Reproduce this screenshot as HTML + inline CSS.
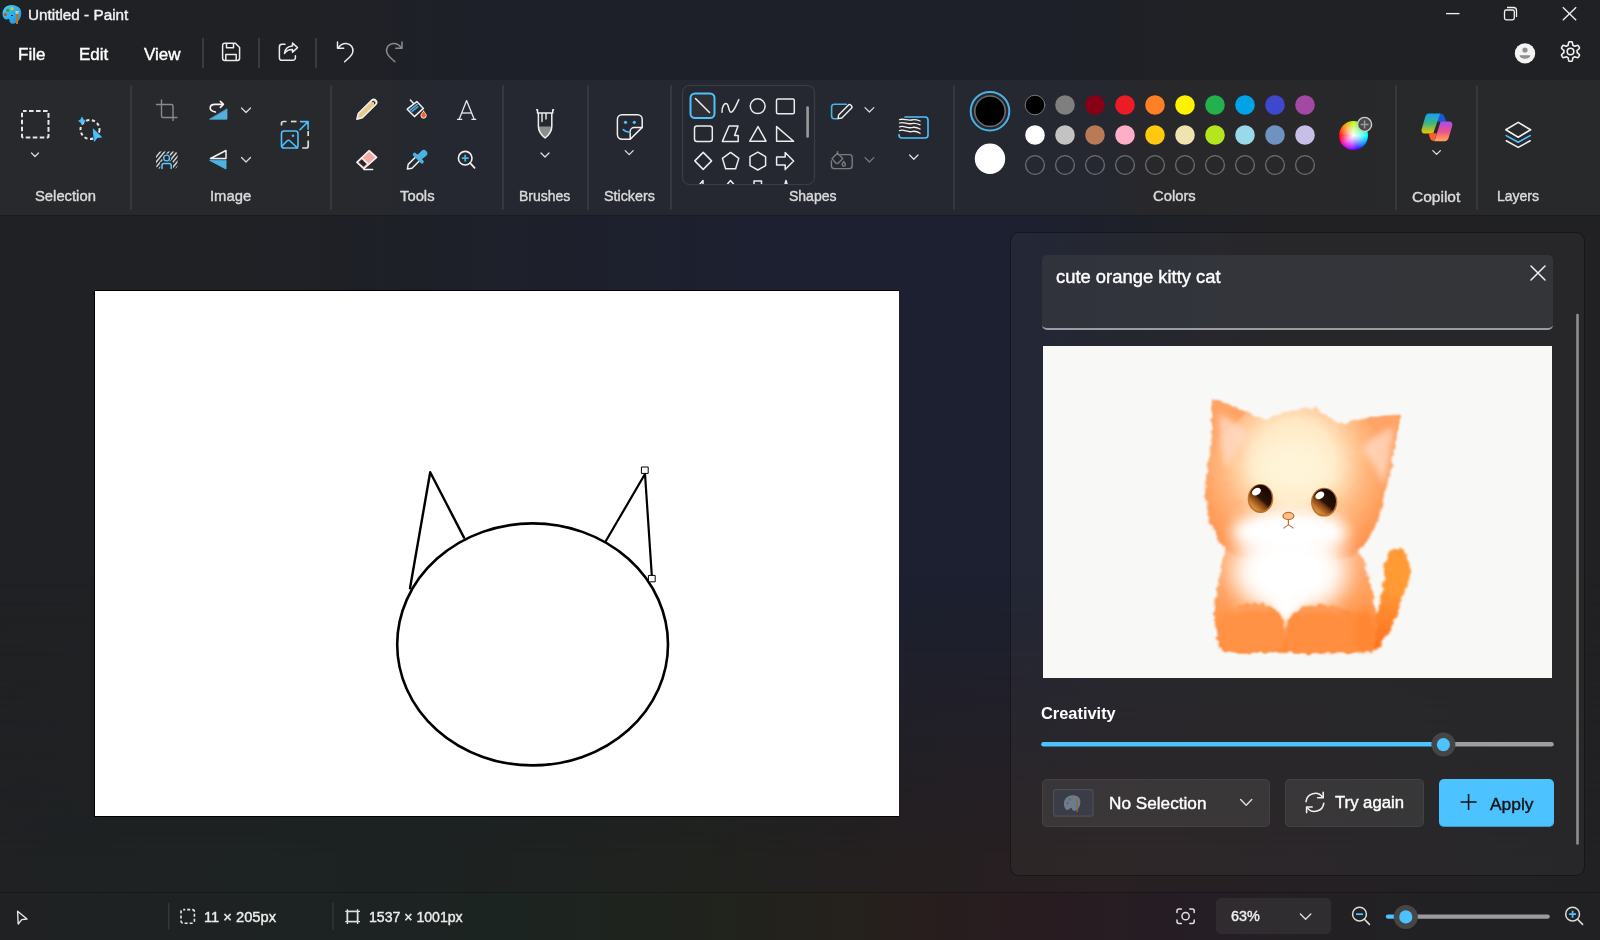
<!DOCTYPE html>
<html><head><meta charset="utf-8">
<style>
*{box-sizing:border-box;margin:0;padding:0}
html,body{width:1600px;height:940px;overflow:hidden;background:#202124}
.t,.lbl{will-change:transform}
body{position:relative;font-family:"Liberation Sans",sans-serif;color:#fff}
.a{position:absolute}
.t{position:absolute;white-space:nowrap;line-height:1;-webkit-text-stroke:0.4px currentColor}
svg{position:absolute;overflow:visible}
#wall{left:0;top:0;width:1600px;height:940px;background:#202124}
#top{left:0;top:0;width:1600px;height:80px;background:linear-gradient(to right,#202124 0,#202125 300px,#1e2029 480px,#1e2029 1060px,#202124 1220px,#202124 100%)}
#ribbon{left:0;top:80px;width:1600px;height:135px;background:linear-gradient(to right,#28292c 0,#28292c 320px,#252831 460px,#252831 1100px,#28282b 1150px,#28292b 100%)}
#rline{left:0;top:215px;width:1600px;height:1px;background:#1a1b1d}
#work{left:0;top:216px;width:1600px;height:676px;background:linear-gradient(to right,#202124 0,#202124 200px,#1e2029 450px,#1c2030 760px,#1c2030 1030px,#1e2029 1130px,#202126 1220px,#212123 1300px,#212123 100%)}
#work2{left:0;top:216px;width:1600px;height:676px;background:linear-gradient(to right,#1f2123 0,#1e2223 150px,#1c2222 400px,#20221e 700px,#251f20 900px,#271f21 1010px,#282022 1100px,#252024 1300px,#222124 1500px,#212123 100%);
 -webkit-mask-image:linear-gradient(to bottom,transparent 0,transparent 360px,black 640px,black 100%);mask-image:linear-gradient(to bottom,transparent 0,transparent 360px,black 640px,black 100%)}
#status{left:0;top:892px;width:1600px;height:48px;background:linear-gradient(to right,#1f2122 0,#1e2222 200px,#1c2322 420px,#1c2421 500px,#20231d 700px,#25211c 850px,#281d1e 950px,#281c21 1050px,#261d24 1160px,#232024 1300px,#212123 1450px,#212123 100%)}
.sep{position:absolute;width:1.6px;top:85px;height:125px;background:#37383c;border-radius:1px}
.lbl{position:absolute;top:188.5px;font-size:14.8px;color:#dadada;white-space:nowrap;line-height:1;-webkit-text-stroke:0.4px currentColor}
.msep{position:absolute;width:1.5px;top:38px;height:30px;background:#3a3b3e}
</style></head><body>
<div id="wall" class="a"></div>
<div id="top" class="a"></div>
<div id="ribbon" class="a"></div>
<div id="rline" class="a"></div>
<div id="work" class="a"></div>
<div id="work2" class="a"></div>
<div id="status" class="a"></div>
<div class="a" style="left:0;top:892px;width:1600px;height:1px;background:rgba(0,0,0,.25)"></div>

<!-- title -->
<div class="t" style="left:28px;top:7px;font-size:15.3px;color:#f2f2f2">Untitled - Paint</div>
<div class="t" style="left:18px;top:46px;font-size:17px;color:#fff">File</div>
<div class="t" style="left:79px;top:46px;font-size:17px;color:#fff">Edit</div>
<div class="t" style="left:144px;top:46px;font-size:17px;color:#fff">View</div>
<div class="msep" style="left:202px"></div>
<div class="msep" style="left:258px"></div>
<div class="msep" style="left:315px"></div>

<!-- ribbon separators -->
<div class="sep" style="left:130px"></div>
<div class="sep" style="left:330px"></div>
<div class="sep" style="left:502px"></div>
<div class="sep" style="left:587px"></div>
<div class="sep" style="left:670px"></div>
<div class="sep" style="left:953px"></div>
<div class="sep" style="left:1395px"></div>
<div class="sep" style="left:1476px"></div>

<div class="lbl" style="left:34.5px">Selection</div>
<div class="lbl" style="left:210px">Image</div>
<div class="lbl" style="left:399.5px">Tools</div>
<div class="lbl" style="left:519px;font-size:14px">Brushes</div>
<div class="lbl" style="left:604px;font-size:14.3px">Stickers</div>
<div class="lbl" style="left:789px;font-size:14px">Shapes</div>
<div class="lbl" style="left:1153px">Colors</div>
<div class="lbl" style="left:1411.5px;font-size:15.5px">Copilot</div>
<div class="lbl" style="left:1497px;font-size:14px">Layers</div>

<!-- canvas -->
<div class="a" style="left:94px;top:290px;width:805px;height:527px;background:#000"></div>
<div class="a" style="left:95px;top:291px;width:804px;height:525px;background:#fff"></div>

<!-- panel -->
<div class="a" style="left:1010px;top:232px;width:574.5px;height:644px;border-radius:9px;background:rgba(255,255,255,.032);border:1.6px solid rgba(10,10,12,.55)"></div>
<div class="a" style="left:1042px;top:255px;width:511px;height:75px;border-radius:5px;background:linear-gradient(to right,#30333c 0,#33353b 200px,#343538 100%);border-bottom:2px solid #9a9ca3"></div>
<div class="t" style="left:1055.5px;top:267.5px;font-size:18.4px;color:#fff">cute orange kitty cat</div>
<svg class="a" style="left:1043px;top:346px;overflow:hidden" width="509" height="332" viewBox="1043 346 509 332">
<defs>
<filter id="fur" filterUnits="userSpaceOnUse" x="1043" y="346" width="509" height="332">
<feTurbulence type="fractalNoise" baseFrequency="0.16 0.16" numOctaves="2" seed="5" result="n"/>
<feDisplacementMap in="SourceGraphic" in2="n" scale="6" xChannelSelector="R" yChannelSelector="G" result="d"/>
<feGaussianBlur in="d" stdDeviation="0.8"/>
</filter>
<filter id="b1" filterUnits="userSpaceOnUse" x="1043" y="346" width="509" height="332"><feGaussianBlur stdDeviation="1.3"/></filter>
<filter id="b2" filterUnits="userSpaceOnUse" x="1043" y="346" width="509" height="332"><feGaussianBlur stdDeviation="3"/></filter>
<filter id="b3" filterUnits="userSpaceOnUse" x="1043" y="346" width="509" height="332"><feGaussianBlur stdDeviation="7"/></filter>
<filter id="b4" filterUnits="userSpaceOnUse" x="1043" y="346" width="509" height="332"><feGaussianBlur stdDeviation="11"/></filter>
<radialGradient id="headg" cx="1294" cy="462" r="108" gradientUnits="userSpaceOnUse">
<stop offset="0" stop-color="#fff4d4"/><stop offset="0.38" stop-color="#ffe8c4"/><stop offset="0.66" stop-color="#ffb880"/><stop offset="0.88" stop-color="#ff9e5c"/><stop offset="1" stop-color="#ff9450"/></radialGradient>
<linearGradient id="bodyg" x1="0" y1="0" x2="0" y2="1"><stop offset="0" stop-color="#ffac74"/><stop offset="0.55" stop-color="#ff9a52"/><stop offset="1" stop-color="#ff8836"/></linearGradient>
<linearGradient id="tailg" x1="0" y1="0" x2="0" y2="1"><stop offset="0" stop-color="#ffa038"/><stop offset="1" stop-color="#ff7624"/></linearGradient>
<linearGradient id="eyeg" x1="0.85" y1="0.1" x2="0.2" y2="0.95"><stop offset="0" stop-color="#140804"/><stop offset="0.5" stop-color="#2a1206"/><stop offset="0.62" stop-color="#7a3e12"/><stop offset="0.85" stop-color="#c47a30"/><stop offset="1" stop-color="#e0a050"/></linearGradient>
</defs>
<rect x="1043" y="346" width="509" height="332" fill="#f8f8f7"/>
<g filter="url(#fur)">
<!-- tail -->
<path d="M1372,640 C1384,624 1392,604 1394,578" stroke="url(#tailg)" stroke-width="20" stroke-linecap="round" fill="none"/>
<ellipse cx="1397" cy="572" rx="13" ry="24" fill="#ff9a34"/>
<!-- body -->
<path d="M1222,652 C1212,630 1212,596 1226,548 L1358,548 C1376,590 1380,628 1372,652 Z" fill="url(#bodyg)"/>
<!-- head -->
<path d="M1212.5,399.5 C1226,404 1250,412 1266,420 C1282,412 1300,407 1316,409 C1326,415 1334,420 1341,424 C1360,418 1382,416 1400,415 C1398,430 1396,440 1394,446 C1392,466 1388,482 1384,496 C1380,520 1372,542 1350,558 L1238,558 C1216,546 1208,522 1205,494 C1206,470 1211,450 1211.7,440 Z" fill="url(#headg)"/>
</g>
<path d="M1212.5,399.5 C1222,403 1236,408 1246,413 L1216,440 C1213,425 1212.5,410 1212.5,399.5 Z" fill="#ffa466" filter="url(#b1)"/>
<path d="M1400,415 C1390,416 1376,417 1364,419 L1394,448 C1396,436 1398,426 1400,415 Z" fill="#ffa466" filter="url(#b1)"/>
<!-- ear inner -->
<path d="M1219,414 C1232,420 1244,428 1250,436 C1240,444 1232,456 1227,470 C1221,450 1219,432 1219,414 Z" fill="#ffdcc8" opacity="0.75" filter="url(#b2)"/>
<path d="M1393,428 C1380,432 1368,440 1362,450 C1372,460 1378,470 1383,486 C1389,466 1392,448 1393,428 Z" fill="#ffdcc8" opacity="0.75" filter="url(#b2)"/>
<!-- face white / chest -->
<ellipse cx="1290" cy="532" rx="58" ry="22" fill="#ffffff" filter="url(#b3)"/>
<ellipse cx="1290" cy="572" rx="58" ry="44" fill="#ffffff" filter="url(#b4)"/>
<ellipse cx="1286" cy="604" rx="14" ry="22" fill="#ffffff" filter="url(#b3)"/>
<ellipse cx="1294" cy="468" rx="40" ry="24" fill="#fff4d8" filter="url(#b4)"/>
<!-- paws -->
<g filter="url(#fur)">
<path d="M1230,652 C1218,650 1216,628 1224,614 C1232,602 1266,600 1278,612 C1286,622 1286,640 1282,648 C1278,652 1260,653 1230,652 Z" fill="#ff9244"/>
<path d="M1292,652 C1284,648 1284,626 1292,614 C1302,602 1340,602 1354,614 C1366,626 1366,646 1356,652 C1340,654 1310,654 1292,652 Z" fill="#ff8e40"/>
</g>
<path d="M1231,612 C1240,606 1258,604 1270,610" stroke="#ffc498" stroke-width="2" fill="none" filter="url(#b2)"/>
<path d="M1300,612 C1312,606 1330,606 1342,612" stroke="#ffc498" stroke-width="2" fill="none" filter="url(#b2)"/>
<ellipse cx="1364" cy="630" rx="10" ry="20" fill="#ff8630" filter="url(#b2)"/>
<!-- eyes -->
<ellipse cx="1260.5" cy="498.5" rx="12.8" ry="14.6" fill="#c07028"/>
<ellipse cx="1260.5" cy="498" rx="11.4" ry="13.2" fill="url(#eyeg)"/>
<ellipse cx="1256.4" cy="491.6" rx="4.8" ry="3.4" fill="#fff" transform="rotate(-30 1256.4 491.6)"/>
<ellipse cx="1324.2" cy="502.2" rx="13.2" ry="14.4" fill="#c07028"/>
<ellipse cx="1324.2" cy="501.8" rx="11.8" ry="13" fill="url(#eyeg)"/>
<ellipse cx="1319.8" cy="495.4" rx="4.8" ry="3.4" fill="#fff" transform="rotate(-30 1319.8 495.4)"/>
<!-- nose -->
<ellipse cx="1288.4" cy="516" rx="5.4" ry="3.6" fill="#f8c08a" stroke="#c86a2a" stroke-width="1.3"/>
<path d="M1288.4,519.6 V525 M1283.6,528.4 C1286,526.4 1288,525 1288.4,525 C1289,525 1291,526.4 1293.4,528.4" stroke="#c06a30" stroke-width="1.2" fill="none"/>
</svg>
<div class="t" style="left:1041px;top:704.5px;font-size:16.4px;font-weight:700;color:#fff;-webkit-text-stroke:0">Creativity</div>

<!-- status texts -->
<div class="t" style="left:204px;top:909.5px;font-size:14.7px;color:#ececec">11 × 205px</div>
<div class="t" style="left:369px;top:909.5px;font-size:14.1px;color:#ececec">1537 × 1001px</div>

<!-- ICONS: title & menu -->
<svg class="a" style="left:0;top:0" width="1600" height="940" viewBox="0 0 1600 940">
<defs>
<linearGradient id="palg" x1="0" y1="0" x2="1" y2="1"><stop offset="0" stop-color="#3fd0ff"/><stop offset="1" stop-color="#1a8fe0"/></linearGradient>
</defs>
<g id="appicon">
<path d="M4.2,18.5 C1.2,14.5 2.2,8.5 7,6 C11,4 17,4.8 20,8.5 C22,12 21.5,16.5 19.3,19.8 C17.2,23 13.5,24.6 10.8,23.2 C9.2,22.3 9.8,20.6 9.2,19.3 C8.4,18.2 6.2,20.6 4.2,18.5 Z" fill="url(#palg)"/>
<circle cx="5.4" cy="14.5" r="1.6" fill="#e8421c"/>
<circle cx="7.8" cy="10.4" r="1.6" fill="#3aa018"/>
<circle cx="12" cy="8.6" r="1.6" fill="#ffc000"/>
<ellipse cx="12" cy="15.5" rx="1" ry="0.6" fill="#111"/>
<rect x="16" y="13.5" width="2" height="10.5" fill="#c7720f"/>
<path d="M15.2,11 L19,11 L18.2,13.8 L16,13.8 Z" fill="#f3c27a"/>
</g>
<g stroke="#f2f2f2" stroke-width="1.3" fill="none">
<line x1="1446" y1="13.6" x2="1459.5" y2="13.6"/>
<rect x="1504.5" y="10" width="9.8" height="9.8" rx="1.8"/>
<path d="M1507,7.5 h6.5 a3,3 0 0 1 3,3 v6.5"/>
<line x1="1562.8" y1="7.2" x2="1576.2" y2="20.2"/>
<line x1="1576.2" y1="7.2" x2="1562.8" y2="20.2"/>
</g>
<!-- save -->
<g stroke="#ececec" stroke-width="1.5" fill="none" stroke-linejoin="round">
<path d="M222.6,45.5 a2.2,2.2 0 0 1 2.2,-2.2 h10.6 l4.2,4.2 v10.8 a2.2,2.2 0 0 1 -2.2,2.2 h-12.6 a2.2,2.2 0 0 1 -2.2,-2.2 z"/>
<path d="M226.5,43.5 v4.2 h7 v-4.2"/>
<path d="M225.8,60 v-5.6 h10.4 v5.6"/>
</g>
<!-- share -->
<g stroke="#ececec" stroke-width="1.5" fill="none" stroke-linejoin="round" stroke-linecap="round">
<path d="M285,44.3 h-3 a2.6,2.6 0 0 0 -2.6,2.6 v10.8 a2.6,2.6 0 0 0 2.6,2.6 h10.8 a2.6,2.6 0 0 0 2.6,-2.6 v-2"/>
<path d="M292.5,43 l5,4.6 l-5,4.6 v-2.6 c-3.5,0 -6,1 -8,3.8 c0.6,-4.6 3.3,-7.2 8,-7.4 z"/>
</g>
<!-- undo -->
<g stroke="#ececec" stroke-width="1.5" fill="none" stroke-linecap="round" stroke-linejoin="round">
<path d="M337.5,42 v6.2 h6.2"/>
<path d="M338,48 c2.2,-3.2 5,-4.8 8.2,-4.6 c4.6,0.4 7.6,4.4 6.6,8.8 c-0.5,2 -1.6,3.5 -3,4.8 l-5.2,4.8"/>
</g>
<!-- redo -->
<g stroke="#8b8b8b" stroke-width="1.5" fill="none" stroke-linecap="round" stroke-linejoin="round">
<path d="M402,42 v6.2 h-6.2"/>
<path d="M401.5,48 c-2.2,-3.2 -5,-4.8 -8.2,-4.6 c-4.6,0.4 -7.6,4.4 -6.6,8.8 c0.5,2 1.6,3.5 3,4.8 l5.2,4.8"/>
</g>
<!-- profile -->
<circle cx="1525" cy="53.4" r="10.2" fill="#f4f4f4"/>
<circle cx="1525" cy="50" r="2.6" fill="#8f8f8f"/>
<path d="M1519.6,55.2 h10.8 a5.4,3.6 0 0 1 -10.8,0 z" fill="#8f8f8f"/>
<!-- gear -->
<g transform="translate(1570.5,51.5)" stroke="#f0f0f0" stroke-width="1.6" fill="none" stroke-linejoin="round">
<path d="M6.60,0.00 L6.60,0.23 L6.58,0.46 L6.56,0.69 L6.54,0.92 L6.73,1.19 L7.18,1.53 L7.64,1.91 L8.10,2.32 L8.53,2.77 L8.90,3.24 L8.99,3.63 L8.86,3.95 L8.72,4.25 L8.56,4.55 L8.40,4.85 L8.23,5.14 L8.04,5.42 L7.85,5.70 L7.64,5.97 L7.25,6.09 L6.66,6.00 L6.06,5.85 L5.47,5.66 L4.91,5.45 L4.39,5.23 L4.06,5.20 L3.88,5.34 L3.69,5.47 L3.50,5.60 L3.30,5.72 L3.10,5.83 L2.89,5.93 L2.68,6.03 L2.47,6.12 L2.34,6.42 L2.27,6.98 L2.17,7.57 L2.04,8.18 L1.86,8.77 L1.64,9.32 L1.35,9.61 L1.01,9.65 L0.68,9.68 L0.34,9.69 L0.00,9.70 L-0.34,9.69 L-0.68,9.68 L-1.01,9.65 L-1.35,9.61 L-1.64,9.32 L-1.86,8.77 L-2.04,8.18 L-2.17,7.57 L-2.27,6.98 L-2.34,6.42 L-2.47,6.12 L-2.68,6.03 L-2.89,5.93 L-3.10,5.83 L-3.30,5.72 L-3.50,5.60 L-3.69,5.47 L-3.88,5.34 L-4.06,5.20 L-4.39,5.23 L-4.91,5.45 L-5.47,5.66 L-6.06,5.85 L-6.66,6.00 L-7.25,6.09 L-7.64,5.97 L-7.85,5.70 L-8.04,5.42 L-8.23,5.14 L-8.40,4.85 L-8.56,4.55 L-8.72,4.25 L-8.86,3.95 L-8.99,3.63 L-8.90,3.24 L-8.53,2.77 L-8.10,2.32 L-7.64,1.91 L-7.18,1.53 L-6.73,1.19 L-6.54,0.92 L-6.56,0.69 L-6.58,0.46 L-6.60,0.23 L-6.60,0.00 L-6.60,-0.23 L-6.58,-0.46 L-6.56,-0.69 L-6.54,-0.92 L-6.73,-1.19 L-7.18,-1.53 L-7.64,-1.91 L-8.10,-2.32 L-8.53,-2.77 L-8.90,-3.24 L-8.99,-3.63 L-8.86,-3.95 L-8.72,-4.25 L-8.56,-4.55 L-8.40,-4.85 L-8.23,-5.14 L-8.04,-5.42 L-7.85,-5.70 L-7.64,-5.97 L-7.25,-6.09 L-6.66,-6.00 L-6.06,-5.85 L-5.47,-5.66 L-4.91,-5.45 L-4.39,-5.23 L-4.06,-5.20 L-3.88,-5.34 L-3.69,-5.47 L-3.50,-5.60 L-3.30,-5.72 L-3.10,-5.83 L-2.89,-5.93 L-2.68,-6.03 L-2.47,-6.12 L-2.34,-6.42 L-2.27,-6.98 L-2.17,-7.57 L-2.04,-8.18 L-1.86,-8.77 L-1.64,-9.32 L-1.35,-9.61 L-1.01,-9.65 L-0.68,-9.68 L-0.34,-9.69 L-0.00,-9.70 L0.34,-9.69 L0.68,-9.68 L1.01,-9.65 L1.35,-9.61 L1.64,-9.32 L1.86,-8.77 L2.04,-8.18 L2.17,-7.57 L2.27,-6.98 L2.34,-6.42 L2.47,-6.12 L2.68,-6.03 L2.89,-5.93 L3.10,-5.83 L3.30,-5.72 L3.50,-5.60 L3.69,-5.47 L3.88,-5.34 L4.06,-5.20 L4.39,-5.23 L4.91,-5.45 L5.47,-5.66 L6.06,-5.85 L6.66,-6.00 L7.25,-6.09 L7.64,-5.97 L7.85,-5.70 L8.04,-5.42 L8.23,-5.14 L8.40,-4.85 L8.56,-4.55 L8.72,-4.25 L8.86,-3.95 L8.99,-3.63 L8.90,-3.24 L8.53,-2.77 L8.10,-2.32 L7.64,-1.91 L7.18,-1.53 L6.73,-1.19 L6.54,-0.92 L6.56,-0.69 L6.58,-0.46 L6.60,-0.23 Z"/>
<circle r="3.3"/>
</g>
</svg>

<!-- ICONS: ribbon selection/image/tools -->
<svg class="a" style="left:0;top:0" width="1600" height="940" viewBox="0 0 1600 940">
<g fill="none" stroke-linecap="round" stroke-linejoin="round">
<!-- selection rect dashed -->
<rect x="22" y="111" width="26.5" height="26.5" rx="1" stroke="#e6e6e6" stroke-width="2" stroke-dasharray="4.6 2.4" stroke-dashoffset="1" stroke-linecap="butt"/>
<path d="M31.5,153 l3.5,3.5 l3.5,-3.5" stroke="#dcdcdc" stroke-width="1.2"/>
<!-- magic select -->
<circle cx="90" cy="129.5" r="9.5" stroke="#e6e6e6" stroke-width="2" stroke-dasharray="3.2 2.6" stroke-linecap="butt"/>
<path d="M82,117.5 q0.9,2.6 3.4,3.5 q-2.5,0.9 -3.4,3.5 q-0.9,-2.6 -3.4,-3.5 q2.5,-0.9 3.4,-3.5 z" fill="#4cc2ff" stroke="#4cc2ff" stroke-width="0.8"/>
<path d="M93.5,129.2 l8,7.8 l-4.3,0.4 l-2.6,3.6 z" fill="#4cc2ff" stroke="#4cc2ff" stroke-width="1"/>

<!-- crop (disabled) -->
<g stroke="#8a8a8a" stroke-width="1.4">
<path d="M161.5,100 v16 a1.5,1.5 0 0 0 1.5,1.5 h14"/>
<path d="M156.5,104.5 h15 a1.5,1.5 0 0 1 1.5,1.5 v14.5"/>
</g>
<!-- rotate -->
<path d="M215.4,112 C212,111.4 210.2,109.8 210.2,108 C210.2,105.6 212.4,104.4 215,104.4 H223" stroke="#f4f4f4" stroke-width="1.6"/>
<path d="M220.4,101.4 L223.4,104.4 L220.4,107.4" stroke="#f4f4f4" stroke-width="1.6"/>

<path d="M227,109.2 V119.2 H210 Z" fill="#52b0dd" stroke="#52b0dd" stroke-width="0.8"/>
<path d="M241.5,108 l4.5,4.5 l4.5,-4.5" stroke="#d8d8d8" stroke-width="1.3"/>
<!-- remove background -->
<defs><clipPath id="cpbg"><rect x="156" y="151.4" width="21.5" height="17" rx="3.5"/></clipPath></defs>
<g clip-path="url(#cpbg)" stroke="#d2d2d2" stroke-width="1.5" stroke-linecap="butt">
<path d="M148,172 l18,-22 M152.2,172 l18,-22 M156.4,172 l18,-22 M160.6,172 l18,-22 M164.8,172 l18,-22 M169,172 l18,-22 M173.2,172 l18,-22 M143.8,172 l18,-22"/>
</g>
<circle cx="166.6" cy="158" r="4.6" fill="#28292c"/>
<rect x="160.2" y="161.8" width="12.8" height="8" fill="#28292c"/>
<circle cx="166.6" cy="158" r="2.9" stroke="#5cc8ff" stroke-width="1.4"/>
<path d="M162,168.4 V165.4 a1.8,1.8 0 0 1 1.8,-1.8 H169.4 a1.8,1.8 0 0 1 1.8,1.8 V168.4" stroke="#5cc8ff" stroke-width="1.5"/>
<!-- flip -->
<path d="M226,150.5 v8 h-15.5 z" stroke="#f0f0f0" stroke-width="1.5"/>
<path d="M226,160.5 v8.5 l-16,-8.5 z" fill="#4ab3e6" stroke="#4ab3e6" stroke-width="1"/>
<path d="M241.5,157.5 l4.5,4.5 l4.5,-4.5" stroke="#d8d8d8" stroke-width="1.3"/>
<!-- resize -->
<g stroke="#dcdcdc" stroke-width="1.7" stroke-linecap="butt">
<path d="M281.5,125.5 v-2 a2,2 0 0 1 2,-2 h3"/>
<path d="M291,121.5 h5.5"/>
<path d="M308.2,131 v5"/>
<path d="M308.2,140.5 v5.5 a2,2 0 0 1 -2,2 h-4"/>
</g>
<path d="M300.5,121.6 h7.6 v7.6 M308,121.7 l-8,8" stroke="#4cc2ff" stroke-width="1.6"/>
<rect x="281.5" y="131" width="16.5" height="17" rx="2.6" stroke="#4cc2ff" stroke-width="1.6"/>
<path d="M282,146 l5,-5 a2,2 0 0 1 3,0 l7.5,7" stroke="#4cc2ff" stroke-width="1.6"/>
<circle cx="293" cy="135.8" r="1.2" fill="#4cc2ff"/>
</g>
</svg>

<!-- ICONS: tools/brushes/stickers -->
<svg class="a" style="left:0;top:0" width="1600" height="940" viewBox="0 0 1600 940">
<g fill="none" stroke-linecap="round" stroke-linejoin="round">
<!-- pencil -->
<path d="M356.8,119.2 L358.2,113.6 L371.6,100.2 a2.7,2.7 0 0 1 4.2,4.2 L362.4,117.8 Z" fill="#e9c98a" stroke="#f4f4f4" stroke-width="1.4"/>
<path d="M371.4,100.6 L375.4,104.6" stroke="#f4f4f4" stroke-width="1.4"/>
<path d="M372.6,101.8 a1.5,1.5 0 0 1 2,2" stroke="#222" stroke-width="1.2"/>
<!-- bucket -->
<path d="M407.2,109.2 L416.8,101.6 L423.4,108.4 L414.4,116.6 Z" fill="#2b2c31" stroke="#f0f0f0" stroke-width="1.5"/>
<path d="M410.01,110.17 L417.10,104.55 M412.00,111.40 L417.84,106.77" stroke="#4ab3e6" stroke-width="1.5"/>
<path d="M410.4,100 L413.6,103.4" stroke="#f0f0f0" stroke-width="1.5"/>
<path d="M423.6,111.2 c1.6,2 2.6,3 2.6,4.4 a2.6,2.6 0 0 1 -5.2,0 c0,-1.4 1,-2.4 2.6,-4.4 z" fill="#ff5a1f" stroke="#f0f0f0" stroke-width="1"/>
<!-- Text A -->
<g stroke="#e8e8e8" stroke-width="1.3" stroke-linecap="butt">
<path d="M459.2,119.2 L466.6,100.6 L474.2,119.2"/>
<path d="M461.8,113 H471.6"/>
<path d="M457,119.4 H462.2 M471.4,119.4 H476.2"/>
</g>
<!-- eraser -->
<path d="M369.2,150.6 L376.6,157.4 L363.8,168.8 L356.8,162.2 Z" fill="#f2aaa9" stroke="#f4f4f4" stroke-width="1.5"/>
<path d="M361.6,157.8 L368.4,164.4" stroke="#f4f4f4" stroke-width="1.5"/>
<path d="M358.6,162.2 L361.8,159.2 L366.6,164 L363.6,166.8 Z" fill="#26272c" stroke="none"/>
<path d="M364,169.4 H372.6" stroke="#f4f4f4" stroke-width="1.5"/>
<!-- dropper -->
<path d="M407.4,169 L408.2,164.4 L417.4,155.2 L421.2,159 L412,168.2 Z" fill="#2a2b30" stroke="#f0f0f0" stroke-width="1.5"/>
<path d="M414.6,154.4 L422,161.8" stroke="#4ab3e6" stroke-width="3.6"/>
<path d="M418.6,154.6 L421.8,151.4 a2.8,2.8 0 0 1 4,4 L421.6,158.6 Z" fill="#4ab3e6" stroke="#4ab3e6" stroke-width="1.2"/>
<!-- zoom -->
<circle cx="465.2" cy="158.2" r="6.8" stroke="#f0f0f0" stroke-width="1.6"/>
<path d="M470.2,163.2 L474.6,167.8" stroke="#f0f0f0" stroke-width="1.7"/>
<path d="M465.2,154.8 V161.6 M461.8,158.2 H468.6" stroke="#4ab3e6" stroke-width="1.8" stroke-linecap="butt"/>
<!-- brush -->
<path d="M537.5,110.2 V113 H552.7 V110.2" stroke="#f0f0f0" stroke-width="1.5"/>
<path d="M552.7,110 L553.6,109.8 M537.5,110 L536.6,109.8" stroke="#f0f0f0" stroke-width="1.4"/>
<path d="M538.4,126.4 C538.4,131 541,134.6 545.1,138 C549.2,134.6 551.8,131 551.8,126.4 Z" fill="#8d8d8d" stroke="none"/>
<path d="M538.4,113.4 V126.4 C538.4,131 541,134.6 545.1,138 C549.2,134.6 551.8,131 551.8,126.4 V113.4" stroke="#f0f0f0" stroke-width="1.5"/>
<path d="M542,113.6 V121.6 M546,113.6 V119" stroke="#f0f0f0" stroke-width="1.4"/>
<path d="M541,153 L545,157 L549,153" stroke="#e0e0e0" stroke-width="1.3"/>
<!-- sticker -->
<path d="M630.2,139.2 H622 a4.6,4.6 0 0 1 -4.6,-4.6 V119.4 a4.6,4.6 0 0 1 4.6,-4.6 H637.6 a4.6,4.6 0 0 1 4.6,4.6 V127.4 Z" stroke="#f0f0f0" stroke-width="1.5"/>
<path d="M630.2,139.2 V131.6 a4,4 0 0 1 4,-4 H642.2" stroke="#f0f0f0" stroke-width="1.5"/>
<circle cx="625.5" cy="122.3" r="1.6" fill="#4cc2ff"/>
<circle cx="634.3" cy="122.3" r="1.6" fill="#4cc2ff"/>
<path d="M623.2,129.6 q3,3 7,2.6" stroke="#4cc2ff" stroke-width="1.5"/>
<path d="M625.2,150.6 L629.2,154.6 L633.2,150.6" stroke="#e0e0e0" stroke-width="1.3"/>
</g>
</svg>

<div class="a" style="left:1338.8px;top:120.9px;width:29.2px;height:29.2px;border-radius:50%;background:radial-gradient(circle, rgba(255,255,255,1) 0%, rgba(255,255,255,.6) 30%, rgba(255,255,255,0) 70%), conic-gradient(#b8ff00 0deg, #30ff50 45deg, #00ffff 90deg, #0070ff 135deg, #3010ff 160deg, #a000ff 195deg, #ff00b0 235deg, #ff0000 270deg, #ff8800 315deg, #b8ff00 360deg)"></div>
<!-- ICONS: shapes/colors/copilot/layers -->
<svg class="a" style="left:0;top:0" width="1600" height="940" viewBox="0 0 1600 940">
<defs>
<clipPath id="cpshapes"><rect x="683" y="86" width="131.5" height="98"/></clipPath>
<linearGradient id="cpl1" x1="0" y1="0" x2="0" y2="1"><stop offset="0" stop-color="#169ff5"/><stop offset="0.5" stop-color="#3fb87a"/><stop offset="1" stop-color="#f0c400"/></linearGradient>
<linearGradient id="cpl2" x1="0" y1="0" x2="0" y2="1"><stop offset="0" stop-color="#a24ef0"/><stop offset="0.5" stop-color="#f0508c"/><stop offset="1" stop-color="#ffa855"/></linearGradient>
<radialGradient id="wheel" cx="0.5" cy="0.5" r="0.5"><stop offset="0" stop-color="#fff"/><stop offset="1" stop-color="#fff" stop-opacity="0"/></radialGradient>
</defs>
<g fill="none" stroke-linecap="round" stroke-linejoin="round">
<rect x="682.5" y="85.5" width="132" height="99" rx="7" stroke="#3a3d45" stroke-width="1.2"/>
<g clip-path="url(#cpshapes)">
<rect x="690.5" y="93.5" width="24" height="24.5" rx="4.5" fill="#2f3036" stroke="#4cc2ff" stroke-width="2"/>
<g stroke="#ececec" stroke-width="1.5">
<path d="M695.5,98.5 L709.5,112.5"/>
<path d="M722,112.2 c0,-6 2.2,-8.6 4,-8.6 c3.2,0 2.2,8.6 5,8.6 c2.8,0 4.6,-6 7.8,-12.6"/>
<circle cx="757.7" cy="106.2" r="7.4"/>
<rect x="776.5" y="99" width="17.8" height="14.8" rx="1.5"/>
<rect x="694.5" y="126" width="17.8" height="15.4" rx="2.5"/>
<path d="M729,126 H738 L734.6,135.6 H738.2 V141.4 H722.4 Z"/>
<path d="M758,126.6 L766,141.2 H749.8 Z"/>
<path d="M776.6,126.6 L793.6,141.2 H776.6 Z"/>
<path d="M703.2,152.4 L711.6,160.9 L703.2,169.4 L694.8,160.9 Z"/>
<path d="M730.6,152.4 L738.8,158.4 L735.6,168.8 H725.6 L722.4,158.4 Z"/>
<path d="M757.8,152.2 L765.6,156.6 V165.6 L757.8,170 L750,165.6 V156.6 Z"/>
<path d="M776.6,157 H785.2 V152.4 L793.6,161 L785.2,169.6 V165 H776.6 Z"/>
<path d="M700,184 L703,180.5 L703,184 M727.5,184 L730.5,180.5 L733.5,184 M754,184 V181 H761.5 V184 M785,184 L786,180.5 L787,184"/>
</g>
</g>
<path d="M807.6,107.5 V136.5" stroke="#9a9a9a" stroke-width="2.6"/>

<!-- outline -->
<path d="M846.4,104.3 H834.4 a2.8,2.8 0 0 0 -2.8,2.8 V116 a2.8,2.8 0 0 0 2.8,2.8 H837.4" stroke="#4ab3e6" stroke-width="1.6"/>
<path d="M838,118.6 L838.6,115 L848,105.4 a2.2,2.2 0 0 1 3.2,3.2 L841.8,118 Z" stroke="#eeeeee" stroke-width="1.4"/>
<path d="M865,107.6 L869.4,112 L873.8,107.6" stroke="#d8d8d8" stroke-width="1.3"/>
<!-- fill (disabled) -->
<g stroke="#7c7c7e" stroke-width="1.4">
<path d="M840.5,154.6 H849.4 a2.8,2.8 0 0 1 2.8,2.8 V165.8 a2.8,2.8 0 0 1 -2.8,2.8 H834.2 a2.8,2.8 0 0 1 -2.8,-2.8 V161"/>
<path d="M832,158.6 L837.5,153.2 L842.8,158.6 L838.4,163 a1.8,1.8 0 0 1 -2.6,0 Z"/>
<path d="M837.5,153 V151.6"/>
<path d="M843.8,161.6 c0.9,1.2 1.6,1.9 1.6,2.8 a1.6,1.6 0 0 1 -3.2,0 c0,-0.9 0.7,-1.6 1.6,-2.8 z"/>
</g>
<path d="M865,157.6 L869.4,162 L873.8,157.6" stroke="#7a7a7c" stroke-width="1.3"/>
<!-- size -->
<path d="M905,117 H925 a3,3 0 0 1 3,3 V135 a3,3 0 0 1 -3,3 H902 a3,3 0 0 1 -3,-3 V133" stroke="#4cc2ff" stroke-width="1.6"/>
<rect x="898" y="118" width="22" height="16" fill="#28292f" stroke="none"/>
<g stroke="#f0f0f0" stroke-width="1.3">
<path d="M899.5,119.6 c4,-1.4 8,1.4 12,0.4 c3,-0.8 6,0 8.6,1"/>
<path d="M899.5,123 c4,-1.4 8,1.6 12,0.6 c3,-0.8 6,0 8.6,1.2"/>
<path d="M899.5,126.8 c4,-1.6 8,1.8 12,0.8 c3,-0.8 6,0 8.6,1.4"/>
<path d="M899.5,130.6 c4,-1.8 8,2 12,1 c3,-0.8 6,0 8.6,1.6"/>
</g>
<path d="M909.6,155 L913.8,159.2 L918,155" stroke="#e0e0e0" stroke-width="1.3"/>

<!-- colors -->
<circle cx="990" cy="111.2" r="19.3" stroke="#4ab3e6" stroke-width="2"/>
<circle cx="990" cy="111.2" r="15.2" fill="#000" stroke="#6a6a6c" stroke-width="1.6"/>
<circle cx="990" cy="158.8" r="15.2" fill="#ffffff"/>
<circle cx="1035" cy="105" r="9.8" fill="#000000" stroke="#777" stroke-width="1"/>
<circle cx="1035" cy="135" r="9.8" fill="#ffffff"/>
<circle cx="1035" cy="165" r="9.4" fill="none" stroke="#6e6e70" stroke-width="1.3"/>
<circle cx="1065" cy="105" r="9.8" fill="#7f7f7f" stroke="none" stroke-width="1"/>
<circle cx="1065" cy="135" r="9.8" fill="#c3c3c3"/>
<circle cx="1065" cy="165" r="9.4" fill="none" stroke="#6e6e70" stroke-width="1.3"/>
<circle cx="1095" cy="105" r="9.8" fill="#880015" stroke="none" stroke-width="1"/>
<circle cx="1095" cy="135" r="9.8" fill="#b97a57"/>
<circle cx="1095" cy="165" r="9.4" fill="none" stroke="#6e6e70" stroke-width="1.3"/>
<circle cx="1125" cy="105" r="9.8" fill="#ed1c24" stroke="none" stroke-width="1"/>
<circle cx="1125" cy="135" r="9.8" fill="#ffaec9"/>
<circle cx="1125" cy="165" r="9.4" fill="none" stroke="#6e6e70" stroke-width="1.3"/>
<circle cx="1155" cy="105" r="9.8" fill="#ff7f27" stroke="none" stroke-width="1"/>
<circle cx="1155" cy="135" r="9.8" fill="#ffc90e"/>
<circle cx="1155" cy="165" r="9.4" fill="none" stroke="#6e6e70" stroke-width="1.3"/>
<circle cx="1185" cy="105" r="9.8" fill="#fff200" stroke="none" stroke-width="1"/>
<circle cx="1185" cy="135" r="9.8" fill="#efe4b0"/>
<circle cx="1185" cy="165" r="9.4" fill="none" stroke="#6e6e70" stroke-width="1.3"/>
<circle cx="1215" cy="105" r="9.8" fill="#22b14c" stroke="none" stroke-width="1"/>
<circle cx="1215" cy="135" r="9.8" fill="#b5e61d"/>
<circle cx="1215" cy="165" r="9.4" fill="none" stroke="#6e6e70" stroke-width="1.3"/>
<circle cx="1245" cy="105" r="9.8" fill="#00a2e8" stroke="none" stroke-width="1"/>
<circle cx="1245" cy="135" r="9.8" fill="#99d9ea"/>
<circle cx="1245" cy="165" r="9.4" fill="none" stroke="#6e6e70" stroke-width="1.3"/>
<circle cx="1275" cy="105" r="9.8" fill="#3f48cc" stroke="none" stroke-width="1"/>
<circle cx="1275" cy="135" r="9.8" fill="#7092be"/>
<circle cx="1275" cy="165" r="9.4" fill="none" stroke="#6e6e70" stroke-width="1.3"/>
<circle cx="1305" cy="105" r="9.8" fill="#a349a4" stroke="none" stroke-width="1"/>
<circle cx="1305" cy="135" r="9.8" fill="#c8bfe7"/>
<circle cx="1305" cy="165" r="9.4" fill="none" stroke="#6e6e70" stroke-width="1.3"/>


<circle cx="1364.6" cy="124.4" r="7" fill="#4a4a4c" stroke="#cfcfcf" stroke-width="1.4"/>
<path d="M1364.6,120.4 V128.4 M1360.6,124.4 H1368.6" stroke="#9a9a9a" stroke-width="1.5" stroke-linecap="butt"/>

<!-- copilot -->
<path d="M1439.6,113.5 C1442.4,113.5 1444,115 1444.8,117.4 L1446.4,121.8 H1440.4 L1437,121.6 Z" fill="#1d56dc" stroke="none"/>
<path d="M1428.6,113.5 H1440.2 L1433.2,133.5 H1424.6 C1422.2,133.5 1421,131.4 1421.7,129 L1425.2,117 C1425.8,115 1426.8,113.5 1428.6,113.5 Z" fill="url(#cpl1)" stroke="none"/>
<path d="M1428.6,133.3 H1436.6 L1434.4,141.2 C1432,141.2 1430.4,139.8 1429.8,137.6 Z" fill="#ff5c2c" stroke="none"/>
<path d="M1440.6,121.6 H1449.2 C1451.8,121.6 1452.8,123.6 1452.2,126 L1448.6,138 C1448,140 1446.6,141.2 1444.8,141.2 H1434.4 Z" fill="url(#cpl2)" stroke="none"/>
<path d="M1432.8,150.6 L1436.6,154.4 L1440.4,150.6" stroke="#e0e0e0" stroke-width="1.3"/>
<!-- layers -->
<path d="M1518.2,122.4 L1530.6,129.8 L1518.2,137.2 L1505.8,129.8 Z" stroke="#f0f0f0" stroke-width="1.6"/>
<path d="M1506.2,135.6 L1518.2,142.2 L1530.2,135.6" stroke="#4cc2ff" stroke-width="1.6"/>
<path d="M1506.2,140.8 L1518.2,147.4 L1530.2,140.8" stroke="#f0f0f0" stroke-width="1.6"/>
</g>
</svg>

<div class="a" style="left:1041.5px;top:778.5px;width:228.5px;height:48px;border-radius:5px;background:rgba(255,255,255,.075);border:1px solid rgba(255,255,255,.05)"></div>
<div class="t" style="left:1109px;top:795px;font-size:17.2px;color:#fff">No Selection</div>
<div class="a" style="left:1285px;top:778.5px;width:139px;height:48px;border-radius:5px;background:rgba(255,255,255,.075);border:1px solid rgba(255,255,255,.05)"></div>
<div class="t" style="left:1335.3px;top:795px;font-size:16.7px;color:#fff">Try again</div>
<div class="a" style="left:1439px;top:778.5px;width:114.6px;height:48px;border-radius:5px;background:#4cc2ff;border-bottom:1px solid #3a9ad0"></div>
<div class="t" style="left:1489.8px;top:795.5px;font-size:17.4px;color:#141414">Apply</div>
<div class="a" style="left:1216.3px;top:898.2px;width:114.3px;height:36.2px;border-radius:5px;background:rgba(255,255,255,.06)"></div>
<div class="t" style="left:1230.6px;top:908.5px;font-size:14.4px;color:#f0f0f0">63%</div>

<!-- canvas drawing + panel + status -->
<svg class="a" style="left:0;top:0" width="1600" height="940" viewBox="0 0 1600 940">
<g fill="none" stroke-linecap="round" stroke-linejoin="round">
<ellipse cx="532.6" cy="644.4" rx="135.4" ry="121" stroke="#000" stroke-width="2.6"/>
<path d="M410,588.2 L430.2,472.2 L464,537.6" stroke="#000" stroke-width="2.4"/>
<path d="M605.4,541.8 L645,474 L652,578.4" stroke="#000" stroke-width="2.2"/>
<rect x="641.8" y="467" width="6.4" height="6.4" fill="#fff" stroke="#000" stroke-width="1"/>
<rect x="648.8" y="575.4" width="6.4" height="6.4" fill="#fff" stroke="#000" stroke-width="1"/>

<!-- prompt close -->
<path d="M1531,266 L1545,280 M1545,266 L1531,280" stroke="#f0f0f0" stroke-width="1.5"/>
<!-- slider -->
<path d="M1043.5,744.2 H1441" stroke="#4cc2ff" stroke-width="4.6"/>
<path d="M1445,744.2 H1551.5" stroke="#9e9e9e" stroke-width="4.6"/>
<circle cx="1443.4" cy="744.6" r="12" fill="#454545"/>
<circle cx="1443.4" cy="744.6" r="6.6" fill="#4cc2ff"/>
<!-- panel scrollbar -->
<path d="M1577.5,315 V843.5" stroke="#8f8f90" stroke-width="2.6"/>
<!-- thumb selector -->
<rect x="1053.6" y="789.6" width="39.4" height="26.6" rx="2.5" fill="#3a3c46" stroke="#4c4e58" stroke-width="1.2"/>
<path d="M1066.4,810 C1062.6,806 1063,799 1068,796.4 C1072,794.4 1077.6,795 1079.6,798.6 C1081,801.6 1080.4,805 1079,807.6 C1077.6,810 1075,811.6 1073,810.6 C1072,810 1072.4,808.8 1071.8,808 C1071,807.4 1069,809.6 1066.4,810 Z" fill="#6c7b90" stroke="none"/>
<circle cx="1067.6" cy="803" r="1.2" fill="#8a5848"/>
<circle cx="1070" cy="799.4" r="1.2" fill="#5a7a50"/>
<circle cx="1073.6" cy="797.8" r="1.2" fill="#8a7a48"/>
<path d="M1077.2,800 V811.4" stroke="#8a6a40" stroke-width="1.4"/>
<path d="M1240.6,799.6 L1246.2,805.2 L1251.8,799.6" stroke="#e0e0e0" stroke-width="1.4"/>
<!-- refresh -->
<g stroke="#f0f0f0" stroke-width="1.6">
<path d="M1322.6,797.2 A9.2,9.2 0 0 0 1306,801.6"/>
<path d="M1307.2,807.6 A9.2,9.2 0 0 0 1323.8,803.2"/>
<path d="M1323.2,792.2 V797.8 H1317.6"/>
<path d="M1306.6,812.6 V807 H1312.2"/>
</g>
<!-- plus -->
<path d="M1468.6,794 V810 M1460.6,802 H1476.6" stroke="#141414" stroke-width="1.6" stroke-linecap="butt"/>

<!-- status bar icons -->
<path d="M17.6,911.2 L27,919 L21.8,919.6 L18.2,924 Z" stroke="#e6e6e6" stroke-width="1.4"/>
<path d="M168.7,903 V929" stroke="#3a3b3d" stroke-width="1.2"/>
<path d="M333,903 V929" stroke="#3a3b3d" stroke-width="1.2"/>
<rect x="181" y="909.6" width="13.4" height="13.6" rx="2.2" stroke="#e6e6e6" stroke-width="1.6" stroke-dasharray="3 2" stroke-dashoffset="1" stroke-linecap="butt"/>
<rect x="347.4" y="911.4" width="10.2" height="10.2" stroke="#e0e0e0" stroke-width="1.5"/>
<path d="M345.2,911.4 H360 M345.2,921.6 H360 M347.4,909.2 V924 M357.6,909.2 V924" stroke="#e0e0e0" stroke-width="1.4" stroke-linecap="butt"/>
<!-- fit -->
<g stroke="#e0e0e0" stroke-width="1.5">
<path d="M1177,912.4 V911 a2,2 0 0 1 2,-2 H1181.4 M1189.8,909 H1192.2 a2,2 0 0 1 2,2 V912.4 M1194.2,920 V921.4 a2,2 0 0 1 -2,2 H1189.8 M1181.4,923.4 H1179 a2,2 0 0 1 -2,-2 V920"/>
<circle cx="1185.6" cy="916.2" r="3.6"/>
</g>
<path d="M1300.4,914 L1305.6,919.2 L1310.8,914" stroke="#dcdcdc" stroke-width="1.4"/>
<!-- zoom out -->
<circle cx="1359.5" cy="914.2" r="6.9" stroke="#dcdcdc" stroke-width="1.5"/>
<path d="M1364.4,919.2 L1369.4,924.4" stroke="#dcdcdc" stroke-width="1.6"/>
<path d="M1356,914.2 H1363" stroke="#4cc2ff" stroke-width="1.8" stroke-linecap="butt"/>
<!-- zoom slider -->
<path d="M1388,916.6 H1400" stroke="#4cc2ff" stroke-width="4.4"/>
<path d="M1410,916.6 H1547.6" stroke="#9c9c9c" stroke-width="4.4"/>
<circle cx="1405.8" cy="916.9" r="12" fill="#464646"/>
<circle cx="1405.8" cy="916.9" r="6.6" fill="#4cc2ff"/>
<!-- zoom in -->
<circle cx="1572.6" cy="914.2" r="6.9" stroke="#dcdcdc" stroke-width="1.5"/>
<path d="M1577.5,919.2 L1582.6,924.4" stroke="#dcdcdc" stroke-width="1.6"/>
<path d="M1569.1,914.2 H1576.1 M1572.6,910.7 V917.7" stroke="#4cc2ff" stroke-width="1.8" stroke-linecap="butt"/>
</g>
</svg>
</body></html>
